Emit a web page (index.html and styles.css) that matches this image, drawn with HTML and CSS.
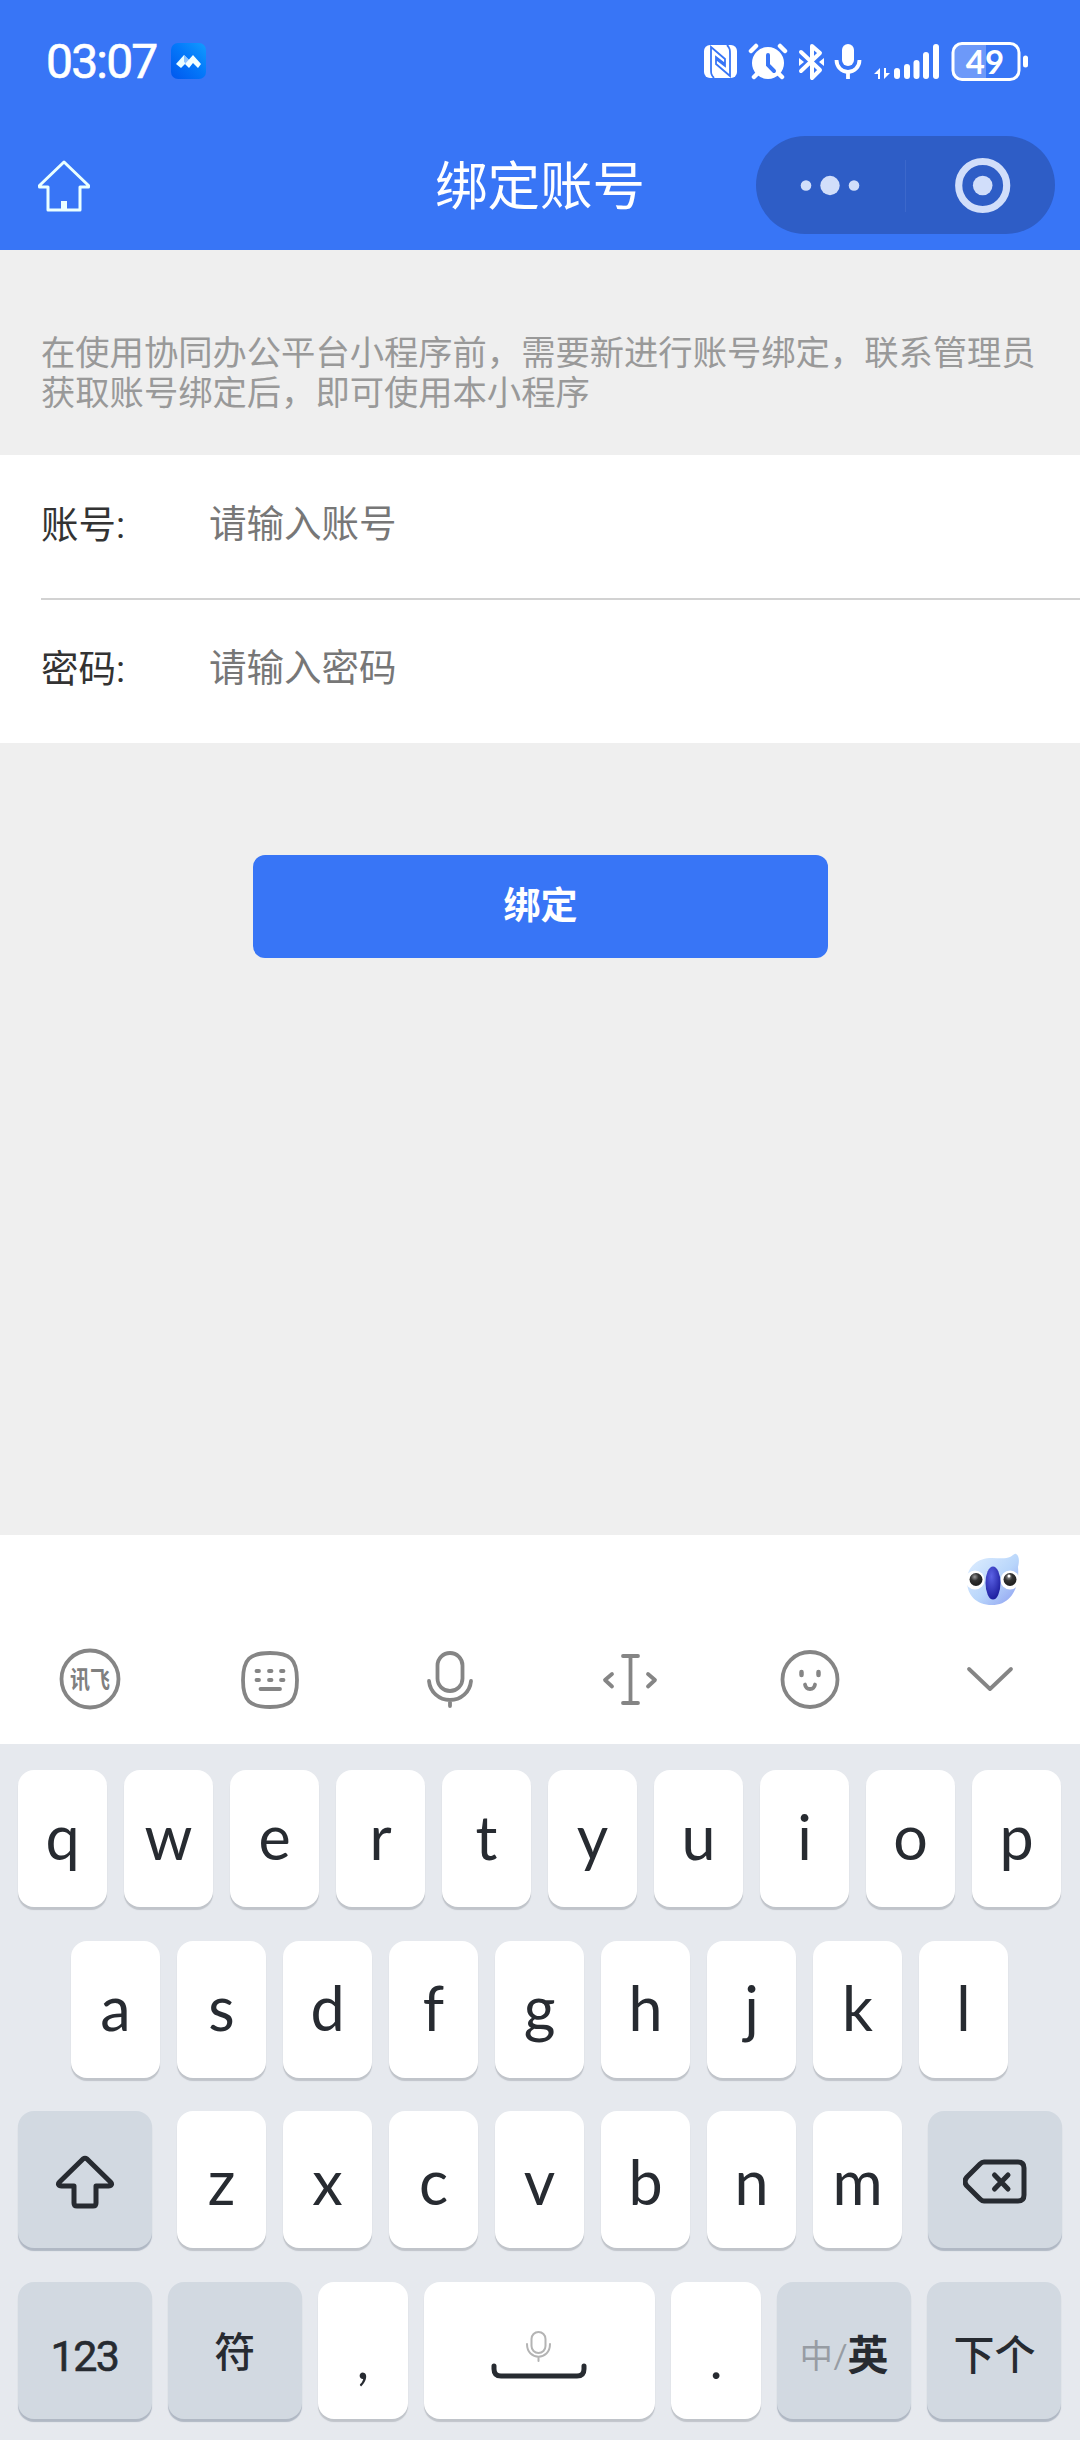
FILE: index.html
```html
<!DOCTYPE html>
<html lang="zh-CN">
<head>
    <meta charset="UTF-8">
    <meta name="viewport" content="width=device-width, initial-scale=1.0">
    <title>绑定账号</title>
    <link rel="stylesheet" href="styles.css">
</head>
<body>
    <header class="header">
        <div class="status-bar">
            <span class="time">03:07</span>
            <svg class="app-icon" width="36" height="36" viewBox="0 0 36 36">
                <defs>
                    <linearGradient id="app" x1="0" y1="1" x2="1" y2="0">
                        <stop offset="0" stop-color="#0057ee"/>
                        <stop offset="0.55" stop-color="#0479fa"/>
                        <stop offset="1" stop-color="#129cff"/>
                    </linearGradient>
                </defs>
                <rect width="35" height="36" rx="7" fill="url(#app)"/>
                <path d="M5 21l8-9 5 5-8 8z" fill="#eaffff"/>
                <path d="M13 12l6 6-3 3-3-2z" fill="#8ec4ff"/>
                <path d="M14 21l8-9 8 9-3 4-5-5-4 5z" fill="#f2ffff"/>
            </svg>
            <svg class="status-icons" width="328" height="40" viewBox="702 40 328 40" fill="#fff">
                <!-- nfc -->
                <rect x="704" y="44" width="33" height="33" rx="6"/>
                <path d="M714 77c-3-3-3-5-3-9V46l14 12v7l-9-7M727 44c3 3 3 5 3 9v22l-14-12v-7l9 7" fill="none" stroke="#3875f6" stroke-width="1.800"/>
                <!-- alarm -->
                <circle cx="768" cy="62" r="16"/>
                <path d="M751 50l5-5M785 50l-5-5M758 72l-4 4M778 72l4 4" stroke="#fff" stroke-width="4.5" stroke-linecap="round"/>
                <path d="M768 54v10l6 6" fill="none" stroke="#3875f6" stroke-width="4" stroke-linecap="round"/>
                <!-- bluetooth -->
                <path d="M801 51l19 18-8 8V45l8 7-19 18" fill="none" stroke="#fff" stroke-width="4" stroke-linecap="round" stroke-linejoin="round"/>
                <path d="M799 57l5 4-5 4zM824 57l-5 4 5 4z"/>
                <!-- mic -->
                <rect x="842" y="43" width="12" height="22" rx="6"/>
                <path d="M836.500 59a11.500 12 0 0 0 23 0M848 71v7" fill="none" stroke="#fff" stroke-width="3.800"/>
                <!-- signal -->
                <path d="M880 78V67l-6 6h4v5zM884 67v11l6-6h-4v-5z"/>
                <rect x="894" y="67" width="6" height="11" rx="3"/>
                <rect x="904" y="63" width="6" height="15" rx="3"/>
                <rect x="913.500" y="59" width="6" height="19" rx="3"/>
                <rect x="923" y="51" width="6" height="27" rx="3"/>
                <rect x="933" y="43" width="6" height="35" rx="3"/>
                <!-- battery -->
                <path d="M962 43h24v36h-24a8 8 0 0 1-8-8V51a8 8 0 0 1 8-8z" fill="#6d99f9"/>
                <rect x="953" y="42.500" width="66" height="36" rx="9" fill="none" stroke="#fff" stroke-width="3"/>
                <rect x="1023" y="54.500" width="5" height="12" rx="2.500"/>
                <text x="985" y="72.500" class="battery-text">49</text>
            </svg>
        </div>
        <div class="nav-bar">
            <svg class="home" width="54" height="54" viewBox="0 0 54 54" fill="none" stroke="#eaffff" stroke-width="3" stroke-linejoin="round">
                <path d="M27 3L2.500 26.500V28H11v23h32V28h8.500v-1.500z"/>
                <path d="M24 42h6v9h-6z" fill="#eaffff" stroke="none"/>
            </svg>
            <h1>绑定账号</h1>
            <div class="capsule">
                <svg width="299" height="98" viewBox="0 0 299 98" fill="#d1defa">
                    <circle cx="50" cy="49.500" r="5.300"/>
                    <circle cx="74" cy="49.500" r="9.700"/>
                    <circle cx="98" cy="49.500" r="5.300"/>
                    <path d="M149.500 24v52" stroke="#3c68cb"/>
                    <circle cx="226.700" cy="49.500" r="24" fill="none" stroke="#d1defa" stroke-width="7.200"/>
                    <circle cx="226.700" cy="49.500" r="9.800"/>
                </svg>
            </div>
        </div>
    </header>

    <main class="content">
        <p class="tips">在使用协同办公平台小程序前，需要新进行账号绑定，联系管理员获取账号绑定后，即可使用本小程序</p>
        <form>
            <div class="form-group">
                <div class="form-item">
                    <label for="account">账号:</label>
                    <input id="account" type="text" placeholder="请输入账号">
                </div>
                <div class="form-item">
                    <label for="password">密码:</label>
                    <input id="password" type="password" placeholder="请输入密码">
                </div>
            </div>
            <button class="bind-btn" type="button">绑定</button>
        </form>
    </main>

    <section class="keyboard">
        <div class="candidate-bar">
            <svg width="60" height="56" viewBox="0 0 60 56">
                <defs>
                    <linearGradient id="bird" x1="0" y1="0" x2="1" y2="1">
                        <stop offset="0" stop-color="#e2f0ff"/>
                        <stop offset="0.55" stop-color="#b9d6fb"/>
                        <stop offset="1" stop-color="#8b9cf0"/>
                    </linearGradient>
                    <radialGradient id="beak" cx="0.4" cy="0.3" r="0.7">
                        <stop offset="0" stop-color="#5b62e4"/>
                        <stop offset="1" stop-color="#1e1fa0"/>
                    </radialGradient>
                    <radialGradient id="eye" cx="0.4" cy="0.3" r="0.6">
                        <stop offset="0" stop-color="#999"/>
                        <stop offset="0.5" stop-color="#333"/>
                        <stop offset="1" stop-color="#222"/>
                    </radialGradient>
                </defs>
                <path d="M5 29C5 14 16 6 30 6c7 0 14 1 18-1 3-1 4-4 6-3 4 2 3 9 2 13 2 22-8 38-26 38C14 53 5 43 5 29z" fill="url(#bird)"/>
                <circle cx="13" cy="28" r="9.500" fill="#fff"/>
                <circle cx="48" cy="28" r="9.500" fill="#fff"/>
                <circle cx="14" cy="27.500" r="6.500" fill="url(#eye)"/>
                <circle cx="48" cy="27.500" r="6.500" fill="url(#eye)"/>
                <circle cx="47" cy="24" r="1.500" fill="#fff"/>
                <ellipse cx="31" cy="31" rx="7.500" ry="16.500" fill="url(#beak)"/>
            </svg>
        </div>
        <div class="toolbar">
            <svg viewBox="0 0 64 64">
                <circle cx="32" cy="31" r="28.500"/>
                <text x="32" y="40" class="logo-text" textLength="40" lengthAdjust="spacingAndGlyphs">讯飞</text>
            </svg>
            <svg viewBox="0 0 64 64">
                <path d="M32 5c-20 0-27 6-27 27s7 27 27 27 27-6 27-27S52 5 32 5z"/>
                <path d="M18.500 23h2.500M31 23h2.500M43 23h2.500M18.500 32h2.500M31 32h2.500M43 32h2.500M22.500 41h19.500"/>
            </svg>
            <svg viewBox="0 0 64 64">
                <rect x="19.500" y="5" width="25" height="38" rx="12.500"/>
                <path d="M11 33c1 11 10 19 21 19s20-8 21-19M32 52v6"/>
            </svg>
            <svg viewBox="0 0 64 64">
                <path d="M25 8h15M25 55h15M32.500 8v47M14 26l-7 6 7 6.500M50 26l7 6-7 6.500"/>
            </svg>
            <svg viewBox="0 0 64 64">
                <circle cx="32" cy="31.500" r="27.500"/>
                <path d="M23.500 24v3M40.500 24v3" stroke-width="4.500"/>
                <path d="M27 36.500c1 6 9 6 10 0"/>
            </svg>
            <svg viewBox="0 0 64 64">
                <path d="M11 21l21 20 21-20"/>
            </svg>
        </div>
        <div class="keys">
            <div class="row">
                <span class="key">q</span>
                <span class="key">w</span>
                <span class="key">e</span>
                <span class="key">r</span>
                <span class="key">t</span>
                <span class="key">y</span>
                <span class="key">u</span>
                <span class="key">i</span>
                <span class="key">o</span>
                <span class="key">p</span>
            </div>
            <div class="row">
                <span class="key">a</span>
                <span class="key">s</span>
                <span class="key">d</span>
                <span class="key">f</span>
                <span class="key">g</span>
                <span class="key">h</span>
                <span class="key">j</span>
                <span class="key">k</span>
                <span class="key">l</span>
            </div>
            <div class="row row-spread">
                <span class="key key-fn">
                    <svg width="60" height="54" viewBox="0 0 60 54">
                        <path d="M28 4L4.500 27c-2 2-1 4 2 4H19v17q0 3 3 3h16q3 0 3-3V31h12.500c3 0 4-2 2-4L32 4q-2-1.500-4 0z"/>
                    </svg>
                </span>
                <div class="letters">
                    <span class="key">z</span>
                    <span class="key">x</span>
                    <span class="key">c</span>
                    <span class="key">v</span>
                    <span class="key">b</span>
                    <span class="key">n</span>
                    <span class="key">m</span>
                </div>
                <span class="key key-fn">
                    <svg width="64" height="46" viewBox="0 0 64 46">
                        <path d="M21 3h34q6 0 6 6v27q0 6-6 6H21q-2 0-4-2L4 27q-4-4.500 0-9L17 5q2-2 4-2z"/>
                        <path d="M31.500 16L45 30M45 16L31.500 30"/>
                    </svg>
                </span>
            </div>
            <div class="row row-spread">
                <span class="key key-fn key-num">123</span>
                <span class="key key-fn">符</span>
                <span class="key key-mark">,</span>
                <span class="key key-space">
                    <svg width="96" height="50" viewBox="0 0 96 50">
                        <g stroke="#b4b4b4" stroke-width="2">
                            <rect x="40.500" y="2" width="14" height="21" rx="7"/>
                            <path d="M36 14c0 17 23 17 23 0M47.500 27v4"/>
                        </g>
                        <path d="M3 36v3q0 7 7 7h76q7 0 7-7v-3"/>
                    </svg>
                </span>
                <span class="key key-mark">.</span>
                <span class="key key-fn key-lang"><small>中/</small><b>英</b></span>
                <span class="key key-fn key-next">下个</span>
            </div>
        </div>
    </section>
</body>
</html>
```

FILE: styles.css
```css
* {
    box-sizing: border-box;
}
body {
    margin: 0;
    height: 2440px;
    display: flex;
    flex-direction: column;
    background-color: #efefef;
    font-family: Roboto, "Noto Sans CJK SC", sans-serif;
    overflow: hidden;
}
svg {
    display: block;
    flex: none;
}

/* header */
.header {
    height: 250px;
    background-color: #3875f6;
    color: #fff;
}
.status-bar {
    height: 122px;
    padding: 0 50px 0 46px;
    display: flex;
    align-items: center;
}
.time {
    width: 125px;
    font-size: 48px;
    letter-spacing: -1.800px;
    -webkit-text-stroke: 0.600px #fff;
}
.status-icons {
    margin-left: auto;
}
.battery-text {
    font-family: Lato, sans-serif;
    font-size: 33px;
    font-weight: 700;
    text-anchor: middle;
}
.nav-bar {
    height: 128px;
    padding: 0 25px;
    display: grid;
    grid-template-columns: 299px 1fr 299px;
    align-items: center;
}
.home {
    margin-left: 12px;
}
h1 {
    margin: 2px 0 0;
    font-size: 52.500px;
    font-weight: 400;
    line-height: 70px;
    text-align: center;
    white-space: nowrap;
}
.capsule {
    margin-top: -2px;
    height: 98px;
    border-radius: 49px;
    background-color: #2e5dc6;
}

/* form */
.content {
    flex: 1;
}
.tips {
    margin: 0;
    height: 205px;
    padding: 83px 40px 0 41px;
    color: #999;
    font-size: 34.300px;
    line-height: 40px;
}
.form-group {
    height: 288px;
    padding-left: 41px;
    background-color: #fff;
}
.form-item {
    height: 143px;
    padding-bottom: 5px;
    display: flex;
    align-items: center;
    font-size: 37.500px;
}
.form-item + .form-item {
    border-top: 2px solid #d2d2d2;
}
label {
    width: 168px;
    padding-bottom: 5px;
    color: #333;
}
input {
    padding: 0;
    border: none;
    outline: none;
    width: 600px;
    font: inherit;
    background: none;
}
input::placeholder {
    color: #777;
}
.bind-btn {
    display: block;
    width: 575px;
    height: 103px;
    margin: 112px 0 0 253px;
    padding: 0 0 7px;
    border: none;
    border-radius: 12px;
    background-color: #3875f6;
    color: #fff;
    font-family: inherit;
    font-size: 37px;
    font-weight: 700;
}

/* keyboard */
.keyboard {
    height: 905px;
    background-color: #fff;
}
.candidate-bar {
    height: 80px;
    padding: 17px 58px 0 0;
    display: flex;
    justify-content: flex-end;
}
.toolbar {
    height: 129px;
    display: grid;
    grid-template-columns: repeat(6, 1fr);
    justify-items: center;
    align-items: center;
}
.toolbar svg {
    width: 64px;
    height: 64px;
    fill: none;
    stroke: #858585;
    stroke-width: 3.800;
    stroke-linecap: round;
    stroke-linejoin: round;
}
.toolbar .logo-text {
    fill: #808080;
    stroke: none;
    font-size: 24px;
    font-weight: 700;
    text-anchor: middle;
}
.keys {
    height: 696px;
    padding: 26px 18.500px 0 17.500px;
    background-color: #e6e9ee;
    display: flex;
    flex-direction: column;
    gap: 33.500px;
}
.row, .letters {
    display: flex;
    justify-content: center;
    gap: 16.500px;
}
.row-spread {
    justify-content: space-between;
    gap: 0;
}
.key {
    width: 89.500px;
    height: 137px;
    padding-bottom: 3px;
    display: flex;
    justify-content: center;
    align-items: center;
    border-radius: 16px;
    background-color: #fff;
    box-shadow: 0 3px 1px #c0c4ca;
    color: #272b31;
    font-family: Lato, "Noto Sans CJK SC", sans-serif;
    font-size: 61px;
    line-height: 74px;
}
.row-spread .key {
    padding: 4px 0 0;
}
.key-fn {
    width: 134px;
    background-color: #d2d9e1;
    box-shadow: 0 3px 1px #b0b8c4;
    font-size: 41px;
    font-weight: 500;
}
.key svg {
    fill: none;
    stroke: #272b31;
    stroke-width: 5;
    stroke-linecap: round;
    stroke-linejoin: round;
}
.row-spread .key-num {
    padding-top: 12px;
    font-family: Roboto, sans-serif;
    font-size: 43px;
    font-weight: 400;
    letter-spacing: -1.500px;
    -webkit-text-stroke: 0.600px #272b31;
}
.row-spread .key-mark {
    padding-top: 18px;
    font-size: 54px;
}
.row-spread .key-space {
    width: 231px;
    padding-top: 10px;
}
.row-spread .key-lang, .row-spread .key-next {
    padding-top: 10px;
}
.key-lang small {
    color: #979ca3;
    font-size: 33px;
    font-weight: 400;
}
.key-next {
    font-size: 41px;
}
```
